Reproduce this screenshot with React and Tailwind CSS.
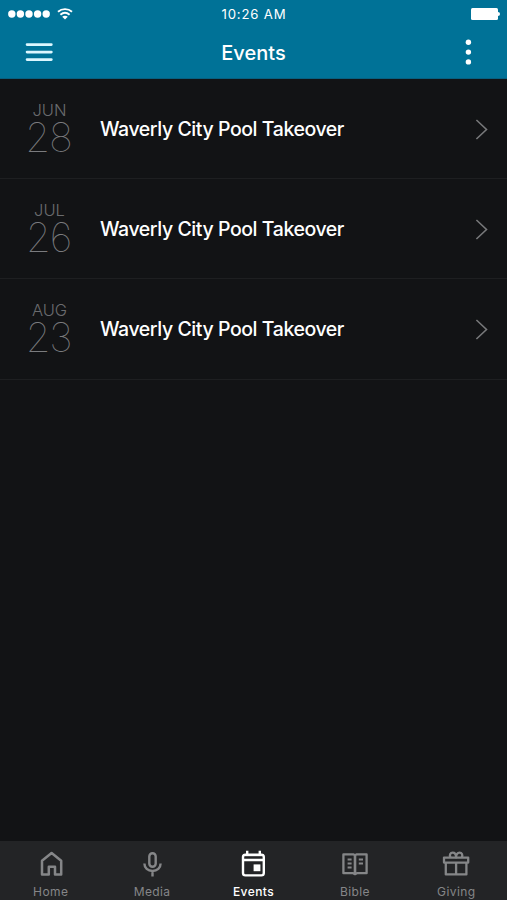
import { useState } from "react";

const events = [
  { id: 1, month: "JUN", day: "28", title: "Waverly City Pool Takeover" },
  { id: 2, month: "JUL", day: "26", title: "Waverly City Pool Takeover" },
  { id: 3, month: "AUG", day: "23", title: "Waverly City Pool Takeover" },
];

const HomeIcon = () => (
  <svg width="28" height="28" viewBox="0 0 28 28" fill="none" stroke="currentColor" strokeWidth="2.5" strokeLinejoin="round">
    <path d="M5 24.6V10.8L14.6 3L24.2 10.8V24.6H18V16.8H11.8V24.6Z" />
  </svg>
);

const MicIcon = () => (
  <svg width="28" height="28" viewBox="0 0 28 28" fill="none" stroke="currentColor" strokeWidth="2.4">
    <rect x="11.3" y="3.2" width="6.4" height="13.6" rx="3.2" />
    <path d="M6.4 13.6C6.4 18 9.8 21 14.5 21S22.6 18 22.6 13.6M14.5 21V26.4" />
  </svg>
);

const CalendarIcon = () => (
  <svg width="28" height="28" viewBox="0 0 28 28" fill="none" stroke="currentColor" strokeWidth="2.4">
    <rect x="4" y="4.6" width="20.8" height="20.8" rx="2.4" />
    <path d="M4 10H24.8M8.2 .8V5M20.8 .8V5" />
    <path d="M4 5.2H24.8" strokeWidth="2" />
    <rect x="14.6" y="14.4" width="6.8" height="6.8" fill="currentColor" stroke="none" />
  </svg>
);

const BookIcon = () => (
  <svg width="28" height="28" viewBox="0 0 28 28" fill="none" stroke="currentColor" strokeWidth="2.3" strokeLinejoin="round">
    <path d="M2.4 4.4H12.6L14 5.4L15.4 4.4H25.6V23.2H15.8L14 24.2L12.2 23.2H2.4Z" />
    <path d="M14 5.4V24.2" strokeWidth="2.6" />
    <path d="M6.6 9.4H10.6M6.6 13.4H10.6M6.6 17.4H10.6M17.8 9.4H22M17.8 13.4H22" strokeWidth="2" />
  </svg>
);

const GiftIcon = () => (
  <svg width="28" height="28" viewBox="0 0 28 28" fill="none" stroke="currentColor" strokeWidth="2.3" strokeLinejoin="round">
    <rect x="2" y="7.6" width="24.2" height="5" />
    <path d="M3.8 12.6V24.4H24.4V12.6M14.1 12.6V24.4" />
    <path d="M8.4 7.4C7.2 5 8.4 2.6 10.6 2.6C12.8 2.6 14.1 4.6 14.1 7.4C14.1 4.6 15.4 2.6 17.6 2.6C19.8 2.6 21 5 19.8 7.4" />
  </svg>
);

const tabs = [
  { name: "Home", icon: HomeIcon },
  { name: "Media", icon: MicIcon },
  { name: "Events", icon: CalendarIcon },
  { name: "Bible", icon: BookIcon },
  { name: "Giving", icon: GiftIcon },
];

const StatusBar = () => (
  <div className="grid h-[27px] grid-cols-3 items-center pl-2 pr-[7px]">
    <div className="flex items-center gap-[7px]">
      <svg width="42" height="8" viewBox="0 0 42 8" fill="white">
        {[0, 1, 2, 3, 4].map((dot) => (
          <circle key={dot} cx={3.8 + dot * 8.6} cy="4" r="3.7" />
        ))}
      </svg>
      <svg width="16" height="12" viewBox="0 0 16 12" fill="none" stroke="white" strokeWidth="1.9">
        <path d="M1 3.8C5 .2 11 .2 15 3.8M3.4 6.7C6.2 4.2 9.8 4.2 12.6 6.7" />
        <path d="M8 11.4L5.2 8.7C6.8 7.3 9.2 7.3 10.8 8.7Z" fill="white" stroke="none" />
      </svg>
    </div>
    <p className="pt-[2px] text-center text-[13.2px] tracking-[0.8px]">10:26 AM</p>
    <div className="flex items-center justify-end">
      <span className="h-3 w-[27px] rounded-[1.5px] bg-white" />
      <span className="ml-[0.5px] h-1 w-[2px] rounded-r-full bg-white" />
    </div>
  </div>
);

const App = () => {
  const [activeTab, setActiveTab] = useState("Events");

  return (
    <div className="flex h-[900px] w-full flex-col overflow-hidden bg-[#121315] font-['Inter',sans-serif] text-white">
      <header className="h-[79px] shrink-0 border-b border-[#075f80] bg-[#007297]">
        <StatusBar />
        <div className="grid h-[50px] grid-cols-3 items-center pl-[25px] pr-[35px]">
          <button aria-label="Menu">
            <svg width="28" height="20" viewBox="0 0 28 20" stroke="#dcf7ff" strokeWidth="2.6" strokeLinecap="round">
              <path d="M2 2.6H26.4M2 10.1H26.4M2 17.6H26.4" />
            </svg>
          </button>
          <h1 className="pl-[10px] pt-px text-center text-[20px] font-medium">Events</h1>
          <button className="flex justify-end" aria-label="More">
            <svg width="7" height="26" viewBox="0 0 7 26" fill="white">
              <circle cx="3.4" cy="3.3" r="2.7" />
              <circle cx="3.4" cy="13.1" r="2.7" />
              <circle cx="3.4" cy="22.9" r="2.7" />
            </svg>
          </button>
        </div>
      </header>

      {/* Events list */}
      <main className="flex-1">
        {events.map((event) => (
          <div key={event.id} className="flex h-[100.2px] items-center border-b-[1.5px] border-[#1e1f21] pr-[19px]">
            <div className="flex w-[99px] flex-col items-center pt-[2px]">
              <span className="text-[16.5px] font-light leading-[17px] text-[#6a6b6e]">{event.month}</span>
              <span className="pr-[2px] text-[40px] font-thin leading-[38px] tracking-[-1.2px] text-[#7a7b7e]">{event.day}</span>
            </div>
            <p className="flex-1 pl-[1px] pt-[2px] text-[19.5px] font-medium tracking-[-0.43px]">{event.title}</p>
            <svg width="13" height="22" viewBox="0 0 13 22" fill="none" stroke="#77787a" strokeWidth="1.6">
              <path d="M1.4 2L11.5 11.5L1.4 21" />
            </svg>
          </div>
        ))}
      </main>

      {/* Bottom tabs */}
      <nav className="grid h-[59px] shrink-0 grid-cols-5 bg-[#232426]">
        {tabs.map(({ name, icon: Icon }) => (
          <button
            key={name}
            onClick={() => setActiveTab(name)}
            className={`flex flex-col items-center pt-[9px] ${
              activeTab === name ? "font-medium text-white" : "text-[#858688]"
            }`}
          >
            <Icon />
            <span className="mt-[6px] text-[12px] leading-4 tracking-[0.4px]">{name}</span>
          </button>
        ))}
      </nav>
    </div>
  );
};

export default App;
